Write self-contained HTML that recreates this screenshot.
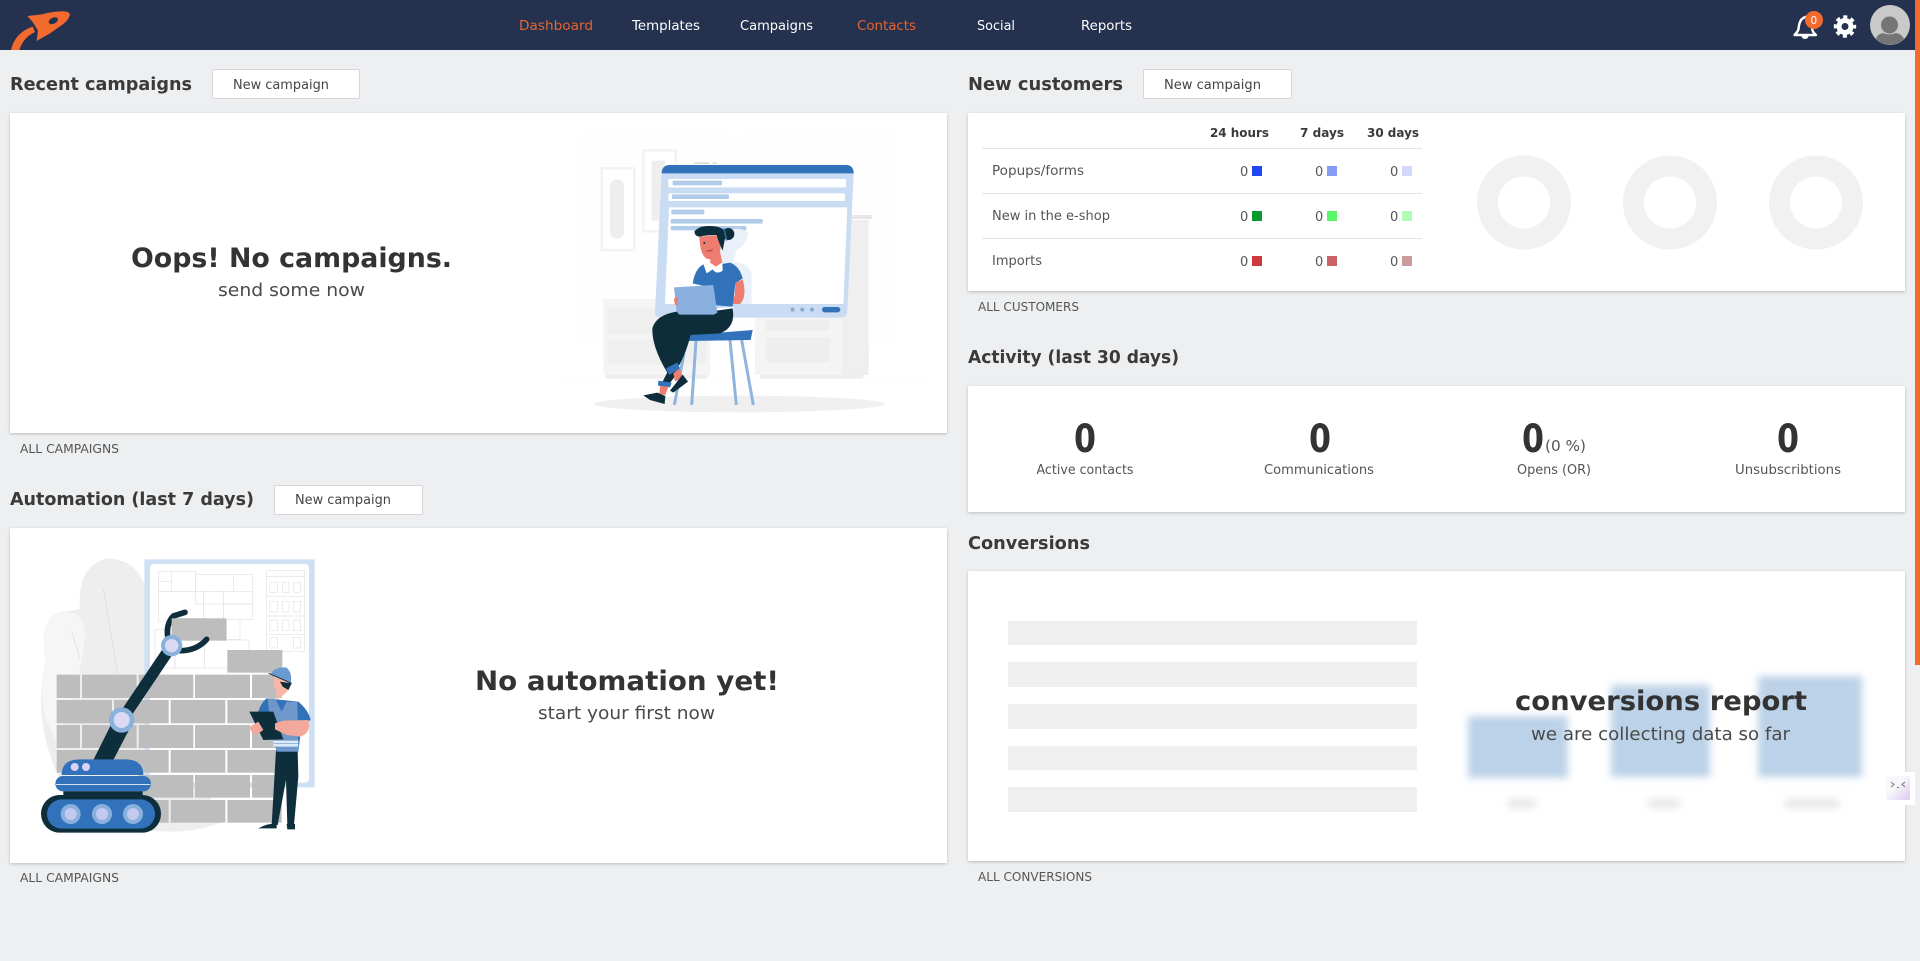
<!DOCTYPE html>
<html lang="en"><head><meta charset="utf-8"><title>Dashboard</title>
<style>
html,body{margin:0;padding:0;width:1920px;height:961px;overflow:hidden;background:#edeff1}
.a{position:absolute}
.nav{left:0;top:0;width:1920px;height:50px;background:#24324f}
.card{background:#fff;box-shadow:0 1px 3px rgba(0,0,0,.22)}
.btn{background:#fff;border:1px solid #d4d6d9;border-radius:2px;box-sizing:border-box}
.bar{left:1915px;width:5px;top:0;height:665px;background:#f26a2e}
svg{position:absolute;left:0;top:0}
text{font-family:"DejaVu Sans","Liberation Sans",sans-serif;fill:#555}
.h{font-size:18px;font-weight:700;fill:#3a3a3a}
.n{font-size:13.5px;fill:#fff}
.o{fill:#e8642d}
.b{font-size:13px;fill:#444}
.s{font-size:12px;fill:#555}
.t{font-size:13px;fill:#555}
.th{font-size:12.5px;font-weight:700;fill:#3a3a3a}
.big{font-size:27px;font-weight:700;fill:#333}
.sub{font-size:18px;fill:#4a4a4a}
.num{font-size:39px;font-weight:700;fill:#333}
</style></head><body>
<div class="a nav"></div>
<div class="a bar"></div>
<div class="a card" style="left:10px;top:113px;width:937px;height:320px"></div>
<div class="a card" style="left:10px;top:528px;width:937px;height:335px"></div>
<div class="a card" style="left:968px;top:113px;width:937px;height:178px"></div>
<div class="a card" style="left:968px;top:386px;width:937px;height:126px"></div>
<div class="a card" style="left:968px;top:571px;width:937px;height:290px"></div>
<div class="a btn" style="left:212px;top:69px;width:148px;height:30px"></div>
<div class="a btn" style="left:1143px;top:69px;width:149px;height:30px"></div>
<div class="a btn" style="left:274px;top:485px;width:149px;height:30px"></div>

<svg width="1920" height="961" viewBox="0 0 1920 961" xmlns="http://www.w3.org/2000/svg">
<defs>
<filter id="bl" x="-30%" y="-30%" width="160%" height="160%"><feGaussianBlur stdDeviation="4"/></filter>
<filter id="bl2" x="-40%" y="-150%" width="180%" height="400%"><feGaussianBlur stdDeviation="4"/></filter>
<linearGradient id="wg" x1="0" y1="0" x2="1" y2="1"><stop offset="0.4" stop-color="#f8f8fb"/><stop offset="1" stop-color="#dcc7ee"/></linearGradient>
</defs>

<!-- logo -->
<g transform="scale(.3333)" fill="#f26a2e">
<path d="M82,48 L125,43 Q165,33 193,34 Q208,35 210,44 Q206,60 190,72 L150,100 L110,123 L114,92 L98,66Z"/>
<ellipse cx="160" cy="62" rx="15" ry="9" transform="rotate(-25 160 62)" fill="#24324f"/>
<path d="M33,150 Q45,98 98,80 L105,96 Q70,112 58,150Z"/>
</g>

<!-- nav -->
<text class="n o" x="519" y="30" textLength="74" lengthAdjust="spacingAndGlyphs">Dashboard</text>
<text class="n" x="632" y="30" textLength="68" lengthAdjust="spacingAndGlyphs">Templates</text>
<text class="n" x="740" y="30" textLength="73" lengthAdjust="spacingAndGlyphs">Campaigns</text>
<text class="n o" x="857" y="30" textLength="59" lengthAdjust="spacingAndGlyphs">Contacts</text>
<text class="n" x="977" y="30" textLength="38" lengthAdjust="spacingAndGlyphs">Social</text>
<text class="n" x="1081" y="30" textLength="51" lengthAdjust="spacingAndGlyphs">Reports</text>

<!-- bell -->
<path d="M1808,16.500 C1800,17 1799,24 1798.500,29 C1798,32 1796,33 1794.500,35 H1816 C1814,33 1812.500,32 1812,28" fill="none" stroke="#fff" stroke-width="2.400" stroke-linejoin="round"/>
<path d="M1801.500,36 a3.500,3 0 0 0 7,0Z" fill="#fff"/>
<circle cx="1814" cy="20" r="9" fill="#f26a2e"/>
<text x="1810.500" y="24" style="font-size:10.5px;fill:#fff">0</text>
<!-- gear -->
<circle cx="1845" cy="26.500" r="6" fill="none" stroke="#fff" stroke-width="5"/>
<circle cx="1845" cy="26.500" r="9.500" fill="none" stroke="#fff" stroke-width="3.400" stroke-dasharray="4 3.460" stroke-dashoffset="2"/>
<!-- avatar -->
<circle cx="1890" cy="25" r="20" fill="#c9c9c9"/>
<circle cx="1889.500" cy="25" r="8.500" fill="#757575"/>
<path d="M1876,39 Q1877,34 1883,33 Q1889.500,36 1896,33 Q1902,34 1904,39 A20,20 0 0 1 1876,39Z" fill="#757575"/>

<!-- headings -->
<text class="h" x="10" y="90" textLength="182" lengthAdjust="spacingAndGlyphs">Recent campaigns</text>
<text class="b" x="233" y="89" textLength="96" lengthAdjust="spacingAndGlyphs">New campaign</text>
<text class="h" x="968" y="90" textLength="155" lengthAdjust="spacingAndGlyphs">New customers</text>
<text class="b" x="1164" y="89" textLength="97" lengthAdjust="spacingAndGlyphs">New campaign</text>
<text class="h" x="10" y="505" textLength="244" lengthAdjust="spacingAndGlyphs">Automation (last 7 days)</text>
<text class="b" x="295" y="504" textLength="96" lengthAdjust="spacingAndGlyphs">New campaign</text>
<text class="h" x="968" y="363" textLength="211" lengthAdjust="spacingAndGlyphs">Activity (last 30 days)</text>
<text class="h" x="968" y="549" textLength="122" lengthAdjust="spacingAndGlyphs">Conversions</text>
<text class="s" x="20" y="453" textLength="99" lengthAdjust="spacingAndGlyphs">ALL CAMPAIGNS</text>
<text class="s" x="20" y="882" textLength="99" lengthAdjust="spacingAndGlyphs">ALL CAMPAIGNS</text>
<text class="s" x="978" y="311" textLength="101" lengthAdjust="spacingAndGlyphs">ALL CUSTOMERS</text>
<text class="s" x="978" y="881" textLength="114" lengthAdjust="spacingAndGlyphs">ALL CONVERSIONS</text>

<text class="big" x="131" y="267" textLength="321" lengthAdjust="spacingAndGlyphs">Oops! No campaigns.</text>
<text class="sub" x="218" y="296" textLength="147" lengthAdjust="spacingAndGlyphs">send some now</text>
<text class="big" x="475" y="690" textLength="304" lengthAdjust="spacingAndGlyphs">No automation yet!</text>
<text class="sub" x="538" y="719" textLength="177" lengthAdjust="spacingAndGlyphs">start your first now</text>

<!-- illustration 1 -->
<g transform="translate(560,120) scale(.33333)">
<rect x="60" y="40" width="460" height="636" rx="10" fill="#fefefe"/>
<rect x="545" y="40" width="465" height="636" rx="10" fill="#fefefe"/>
<rect x="125" y="145" width="98" height="245" fill="#fff" stroke="#f2f2f2" stroke-width="7"/>
<rect x="150" y="178" width="42" height="178" rx="20" fill="#eeeeee"/>
<rect x="250" y="91" width="97" height="243" fill="#fff" stroke="#f2f2f2" stroke-width="7"/>
<rect x="275" y="122" width="40" height="180" fill="#eeeeee"/>
<rect x="402" y="127" width="46" height="5" fill="#dcdcdc"/><rect x="458" y="127" width="12" height="5" fill="#dcdcdc"/>
<rect x="130" y="537" width="320" height="228" fill="#f4f4f4"/>
<rect x="143" y="565" width="295" height="75" rx="6" fill="#efefef"/>
<rect x="143" y="658" width="295" height="75" rx="6" fill="#efefef"/>
<rect x="137" y="765" width="305" height="12" fill="#ededed"/>
<rect x="585" y="590" width="340" height="175" fill="#f4f4f4"/>
<rect x="848" y="300" width="78" height="465" fill="#efefef"/>
<rect x="850" y="285" width="86" height="12" fill="#e6e6e6"/>
<rect x="618" y="652" width="192" height="75" rx="6" fill="#eeeeee"/>
<rect x="618" y="600" width="192" height="32" fill="#eeeeee"/>
<rect x="600" y="765" width="310" height="12" fill="#ededed"/>
<rect x="0" y="775" width="1100" height="2" fill="#fafafa"/>
<ellipse cx="538" cy="852" rx="436" ry="25" fill="#f0f0f0"/>
<path d="M305,158 Q306,135 330,135 L858,135 Q880,135 881,158 L862,575 Q860,593 840,593 L305,593 Q285,593 285,575Z" fill="#c9dcf3"/>
<path d="M305,160 Q306,135 330,135 L858,135 Q880,135 881,160Z" fill="#3172bb"/>
<rect x="325" y="177" width="533" height="25" rx="3" fill="#fff"/>
<rect x="325" y="220" width="530" height="23" rx="3" fill="#fff"/>
<path d="M327,262 L862,262 L850,552 L315,552Z" fill="#fff"/>
<rect x="338" y="182" width="148" height="14" rx="3" fill="#b1cce8"/>
<rect x="336" y="223" width="171" height="14" rx="3" fill="#b1cce8"/>
<rect x="334" y="269" width="99" height="14" rx="3" fill="#b1cce8"/>
<rect x="332" y="297" width="276" height="14" rx="3" fill="#b1cce8"/>
<rect x="332" y="318" width="227" height="13" rx="3" fill="#b1cce8"/>
<circle cx="698" cy="569" r="6" fill="#8aa9cf"/><circle cx="727" cy="569" r="6" fill="#8aa9cf"/><circle cx="756" cy="569" r="6" fill="#8aa9cf"/>
<rect x="786" y="561" width="55" height="16" rx="8" fill="#3172bb"/>
<path d="M495,335 Q540,315 565,340 Q560,375 530,390 L520,425 Q570,430 575,465 L575,552 L460,552 L460,430Z" fill="#e9f0f9"/>
<!-- stool -->
<g stroke="#8fb5de" stroke-width="9" fill="none"><path d="M408,663L395,855M510,660L529,855M545,660L580,855M372,700L343,855"/></g>
<path d="M392,645L578,630L572,660L386,663Z" fill="#3172bb"/>
<!-- body -->
<path d="M548,478 Q562,530 540,552 L470,552 L470,532 L524,530 L526,490Z" fill="#ee7c70"/>
<path d="M432,432 Q470,436 510,428 Q538,438 548,475 L526,490 L518,560 L470,556 L440,500 L398,490 Q405,445 432,432Z" fill="#3172bb"/>
<path d="M470,565 L520,560 L520,572 L470,575Z" fill="#fff"/>
<path d="M452,400 L450,438 L475,448 L487,428 L478,385Z" fill="#ee7c70"/>
<path d="M418,350 L478,345 Q486,380 478,402 Q462,424 440,416 Q420,404 418,350Z" fill="#ee7c70"/>
<circle cx="433" cy="369" r="3" fill="#0e2d3a"/>
<path d="M440,392 Q450,396 458,388" stroke="#a83f38" stroke-width="3" fill="none"/>
<path d="M430,432 L445,425 L468,440 L487,427 L488,452 Q470,465 458,448 L440,460Z" fill="#fff"/>
<path d="M403,335 Q420,312 470,320 Q498,326 497,345 L488,392 Q475,365 470,345 Q440,345 420,350 Q405,350 403,335Z" fill="#0e2d3a"/>
<circle cx="505" cy="342" r="18" fill="#0e2d3a"/>
<path d="M492,325L500,362" stroke="#3172bb" stroke-width="4"/>
<!-- legs -->
<path d="M518,565 Q528,622 480,640 L392,645 Q378,700 358,735 L322,758 Q275,680 277,625 Q288,585 350,575 L470,572Z" fill="#0e2d3a"/>
<path d="M355,735 L322,757 L305,790 L325,795 L360,750Z" fill="#0e2d3a"/>
<path d="M318,745L352,728L360,745L328,765Z" fill="#3172bb"/>
<path d="M295,782L335,788L330,802L294,797Z" fill="#3172bb"/>
<path d="M300,798L325,800L316,825L298,822Z" fill="#ee7c70"/>
<path d="M340,760L358,745L368,770L345,785Z" fill="#ee7c70"/>
<path d="M250,826 L292,818 L316,828 L314,852 L270,840Z" fill="#0e2d3a"/>
<path d="M368,764 L384,785 L340,818 L330,812Z" fill="#0e2d3a"/>
<path d="M342,502 L460,495 L472,578 L462,584 L358,584 L350,575Z" fill="#8ab0e0"/>
<path d="M342,535 L355,530 L352,560 L344,552Z" fill="#ee7c70"/>
</g>

<!-- illustration 2 -->
<g transform="translate(0,530) scale(.33333)">
<path d="M320,85 Q400,85 432,160 L480,600 L680,870 Q600,905 520,905 Q400,905 280,880 Q170,780 135,620 Q110,500 135,420 L135,330 Q140,245 195,243 Q225,243 240,235 Q230,110 320,85Z" fill="#eeeeee"/>
<path d="M195,243 Q255,250 257,320 L240,420 L170,640 L135,560 Q115,480 135,400 L130,320 Q140,245 195,243Z" fill="#f6f6f6"/>
<path d="M310,175L352,430M215,305L240,385" stroke="#dadada" stroke-width="2" fill="none"/>
<rect x="433" y="88" width="511" height="684" rx="4" fill="#cfe0f4"/>
<rect x="450" y="102" width="477" height="656" rx="12" fill="#fff"/>
<g fill="none" stroke="#e2e2e2" stroke-width="2">
<rect x="475" y="124" width="112" height="60"/><rect x="587" y="134" width="170" height="88"/><rect x="475" y="184" width="136" height="90"/><rect x="611" y="184" width="60" height="90"/><rect x="671" y="222" width="86" height="46"/><path d="M475,155H515M515,124V184M700,134V185M671,185H757"/>
<rect x="465" y="298" width="60" height="116"/><rect x="525" y="274" width="88" height="140"/><rect x="613" y="330" width="134" height="84"/><rect x="680" y="268" width="40" height="60"/>
<rect x="800" y="121" width="113" height="243"/><path d="M800,140H913M800,200H913M800,258H913M800,314H913"/>
<path d="M810,158h22v30h-22zM847,158h20v30h-20zM880,158h22v30h-22zM810,214h22v32h-22zM847,214h20v32h-20zM880,214h22v32h-22zM810,270h22v32h-22zM847,270h20v32h-20zM880,270h22v32h-22zM810,322h22v32h-22zM880,322h22v32h-22z"/>
</g>
<g fill="#bdbdbd">
<rect x="515" y="265" width="164" height="67"/><rect x="682" y="360" width="165" height="68"/>
<rect x="170" y="434" width="70" height="70"/><rect x="246" y="434" width="164" height="70"/><rect x="416" y="434" width="164" height="70"/><rect x="585" y="434" width="165" height="70"/><rect x="756" y="434" width="89" height="70"/>
<rect x="170" y="510" width="166" height="70"/><rect x="342" y="510" width="164" height="70"/><rect x="512" y="510" width="164" height="70"/><rect x="682" y="510" width="163" height="70"/>
<rect x="170" y="585" width="70" height="69"/><rect x="246" y="585" width="164" height="69"/><rect x="416" y="585" width="164" height="69"/><rect x="585" y="585" width="165" height="69"/><rect x="756" y="585" width="89" height="69"/>
<rect x="170" y="660" width="166" height="68"/><rect x="342" y="660" width="164" height="68"/><rect x="512" y="660" width="164" height="68"/><rect x="682" y="660" width="163" height="68"/>
<rect x="416" y="735" width="164" height="68"/><rect x="585" y="735" width="165" height="68"/><rect x="756" y="735" width="89" height="68"/>
<rect x="342" y="810" width="164" height="68"/><rect x="512" y="810" width="164" height="68"/><rect x="682" y="810" width="163" height="68"/>
</g>
<path d="M280,690L340,690L392,590L340,570Z" fill="#0f2e3c"/>
<path d="M365,570L515,347" stroke="#0f2e3c" stroke-width="34" fill="none"/>
<path d="M505,330 Q495,285 520,258 L555,247" stroke="#0f2e3c" stroke-width="17" fill="none" stroke-linecap="round"/>
<path d="M540,362 Q590,362 620,328" stroke="#0f2e3c" stroke-width="17" fill="none" stroke-linecap="round"/>
<rect x="515" y="265" width="100" height="50" fill="#bdbdbd"/>
<circle cx="365" cy="570" r="38" fill="#8ab0de"/><circle cx="365" cy="570" r="24" fill="#dcd9f5"/>
<circle cx="515" cy="347" r="32" fill="#8ab0de"/><circle cx="515" cy="347" r="20" fill="#dcd9f5"/>
<path d="M185,735 Q185,688 240,688 L375,688 Q430,688 430,735Z" fill="#3172bb"/>
<circle cx="224" cy="711" r="12" fill="#d8d3f3"/><circle cx="258" cy="711" r="12" fill="#d8d3f3"/>
<rect x="166" y="738" width="287" height="46" rx="23" fill="#3172bb"/>
<rect x="168" y="762" width="283" height="3" fill="#cfe0f4"/>
<rect x="190" y="784" width="238" height="16" fill="#0f2e3c"/>
<rect x="123" y="795" width="360" height="113" rx="56" fill="#0f2e3c"/>
<rect x="141" y="808" width="324" height="88" rx="44" fill="#3172bb"/>
<g fill="#8ab0de"><circle cx="212" cy="852" r="30"/><circle cx="306" cy="852" r="30"/><circle cx="399" cy="852" r="30"/></g>
<g fill="#c4c9f0"><circle cx="212" cy="852" r="18"/><circle cx="306" cy="852" r="18"/><circle cx="399" cy="852" r="18"/></g>
<!-- man -->
<path d="M828,660L893,660L895,740L882,885L862,885L858,750L833,885L815,885Z" fill="#0f2e3c"/>
<path d="M775,895 Q800,880 830,880 L830,895Z M860,882 L885,882 L885,898 L862,898Z" fill="#0f2e3c"/>
<path d="M800,505 L895,515 Q925,540 932,570 L905,585 L895,665 L830,665 L812,600 L770,570 Q775,525 800,505Z" fill="#3172bb"/>
<path d="M803,505 L825,505 L845,545 L860,515 L892,515 L895,665 L830,665 L812,590Z" fill="#6f97c9"/>
<path d="M820,632H895V640H820ZM820,650H895V642H820Z" fill="#dcebf8"/>
<path d="M822,440L872,440L868,478L850,495L830,510L828,478Q818,470 822,440Z" fill="#f7b7a8"/>
<path d="M840,455 L875,460 L865,480 L848,470Z" fill="#0f2e3c"/>
<path d="M812,430 Q830,408 860,413 Q878,430 872,458 L840,445Z" fill="#6a9bd0"/>
<path d="M806,430L875,460" stroke="#0f2e3c" stroke-width="3"/>
<path d="M748,545L820,545L850,628L790,630Z" fill="#0f2e3c"/>
<path d="M750,590 L775,575 L790,600 L768,615 Q750,610 750,590Z M825,580 L850,572 L925,570 Q935,610 900,620 L860,615 L825,598Z" fill="#f2a89a"/>
</g>

<!-- table -->
<text class="th" x="1210" y="137" textLength="59" lengthAdjust="spacingAndGlyphs">24 hours</text>
<text class="th" x="1300" y="137" textLength="44" lengthAdjust="spacingAndGlyphs">7 days</text>
<text class="th" x="1367" y="137" textLength="52" lengthAdjust="spacingAndGlyphs">30 days</text>
<path d="M982,148.500H1422M982,193.500H1422M982,238.500H1422" stroke="#e4e4e4" stroke-width="1"/>
<text class="t" x="992" y="175" textLength="92" lengthAdjust="spacingAndGlyphs">Popups/forms</text>
<text class="t" x="992" y="220" textLength="118" lengthAdjust="spacingAndGlyphs">New in the e-shop</text>
<text class="t" x="992" y="265" textLength="50" lengthAdjust="spacingAndGlyphs">Imports</text>
<g>
<text class="t" x="1240" y="176">0</text><text class="t" x="1315" y="176">0</text><text class="t" x="1390" y="176">0</text>
<text class="t" x="1240" y="221">0</text><text class="t" x="1315" y="221">0</text><text class="t" x="1390" y="221">0</text>
<text class="t" x="1240" y="266">0</text><text class="t" x="1315" y="266">0</text><text class="t" x="1390" y="266">0</text>
</g>
<rect x="1252" y="166" width="10" height="10" fill="#1f46f5"/><rect x="1327" y="166" width="10" height="10" fill="#869df5"/><rect x="1402" y="166" width="10" height="10" fill="#d0d9fa"/>
<rect x="1252" y="211" width="10" height="10" fill="#0a9a2c"/><rect x="1327" y="211" width="10" height="10" fill="#5cf56a"/><rect x="1402" y="211" width="10" height="10" fill="#b0fbb8"/>
<rect x="1252" y="256" width="10" height="10" fill="#cf3a3c"/><rect x="1327" y="256" width="10" height="10" fill="#c96365"/><rect x="1402" y="256" width="10" height="10" fill="#cb9a9b"/>

<!-- donuts -->
<g fill="none" stroke="#f1f1f1" stroke-width="21">
<circle cx="1524" cy="202.500" r="36.500"/><circle cx="1670" cy="202.500" r="36.500"/><circle cx="1816" cy="202.500" r="36.500"/>
</g>

<!-- activity -->
<text class="num" x="1074" y="452" textLength="22" lengthAdjust="spacingAndGlyphs">0</text>
<text class="num" x="1309" y="452" textLength="22" lengthAdjust="spacingAndGlyphs">0</text>
<text class="num" x="1522" y="452" textLength="22" lengthAdjust="spacingAndGlyphs">0</text>
<text x="1545" y="451" textLength="41" lengthAdjust="spacingAndGlyphs" style="font-size:15px">(0 %)</text>
<text class="num" x="1777" y="452" textLength="22" lengthAdjust="spacingAndGlyphs">0</text>
<text class="t" x="1036.500" y="474" textLength="97" lengthAdjust="spacingAndGlyphs">Active contacts</text>
<text class="t" x="1264" y="474" textLength="110" lengthAdjust="spacingAndGlyphs">Communications</text>
<text class="t" x="1517" y="474" textLength="74" lengthAdjust="spacingAndGlyphs">Opens (OR)</text>
<text class="t" x="1735" y="474" textLength="106" lengthAdjust="spacingAndGlyphs">Unsubscribtions</text>

<!-- conversions -->
<g fill="#efefef">
<rect x="1008" y="621" width="409" height="24"/><rect x="1008" y="662" width="409" height="25"/><rect x="1008" y="704" width="409" height="25"/><rect x="1008" y="746" width="409" height="24"/><rect x="1008" y="787" width="409" height="25"/>
</g>
<g fill="#bcd2e8" filter="url(#bl)">
<rect x="1468" y="716" width="100" height="62"/><rect x="1611" y="685" width="99" height="92"/><rect x="1758" y="676" width="104" height="101"/>
</g>
<g fill="#e6e6e6" filter="url(#bl2)">
<rect x="1508" y="799" width="28" height="9"/><rect x="1648" y="799" width="32" height="9"/><rect x="1785" y="799" width="54" height="9"/>
</g>
<text class="big" x="1515" y="710" textLength="292" lengthAdjust="spacingAndGlyphs">conversions report</text>
<text class="sub" x="1531" y="740" textLength="259" lengthAdjust="spacingAndGlyphs">we are collecting data so far</text>

<!-- widget -->
<rect x="1882" y="772" width="33" height="33" fill="#fff"/>
<rect x="1886" y="776" width="24" height="24" rx="2" fill="url(#wg)"/>
<path d="M1891,782l3,2.500-3,2.500M1905,782l-3,2.500 3,2.500M1897,787.500h2" stroke="#777" stroke-width="1" fill="none"/>
</svg>
</body></html>
